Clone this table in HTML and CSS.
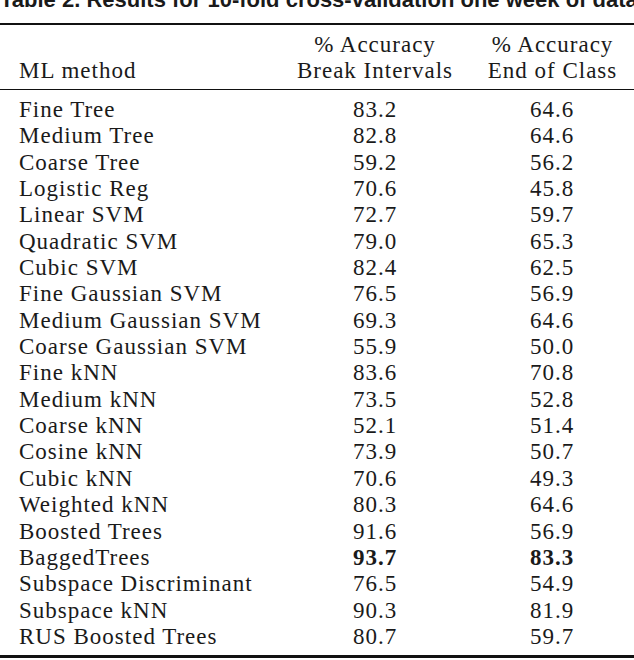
FILE: index.html
```html
<!DOCTYPE html>
<html>
<head>
<meta charset="utf-8">
<link rel="stylesheet" href="styles.css">
</head>
<body>
<div class="caption">Table 2. Results for 10-fold cross-validation one week of data:</div>
<table class="results">
  <thead>
    <tr>
      <th class="method">ML method</th>
      <th class="num"><span>% Accuracy</span><br><span>Break Intervals</span></th>
      <th class="num"><span>% Accuracy</span><br><span>End of Class</span></th>
    </tr>
  </thead>
  <tbody>
    <tr class="first"><td>Fine Tree</td><td class="num">83.2</td><td class="num">64.6</td></tr>
    <tr><td>Medium Tree</td><td class="num">82.8</td><td class="num">64.6</td></tr>
    <tr><td>Coarse Tree</td><td class="num">59.2</td><td class="num">56.2</td></tr>
    <tr><td>Logistic Reg</td><td class="num">70.6</td><td class="num">45.8</td></tr>
    <tr><td>Linear SVM</td><td class="num">72.7</td><td class="num">59.7</td></tr>
    <tr><td>Quadratic SVM</td><td class="num">79.0</td><td class="num">65.3</td></tr>
    <tr><td>Cubic SVM</td><td class="num">82.4</td><td class="num">62.5</td></tr>
    <tr><td>Fine Gaussian SVM</td><td class="num">76.5</td><td class="num">56.9</td></tr>
    <tr><td>Medium Gaussian SVM</td><td class="num">69.3</td><td class="num">64.6</td></tr>
    <tr><td>Coarse Gaussian SVM</td><td class="num">55.9</td><td class="num">50.0</td></tr>
    <tr><td>Fine kNN</td><td class="num">83.6</td><td class="num">70.8</td></tr>
    <tr><td>Medium kNN</td><td class="num">73.5</td><td class="num">52.8</td></tr>
    <tr><td>Coarse kNN</td><td class="num">52.1</td><td class="num">51.4</td></tr>
    <tr><td>Cosine kNN</td><td class="num">73.9</td><td class="num">50.7</td></tr>
    <tr><td>Cubic kNN</td><td class="num">70.6</td><td class="num">49.3</td></tr>
    <tr><td>Weighted kNN</td><td class="num">80.3</td><td class="num">64.6</td></tr>
    <tr><td>Boosted Trees</td><td class="num">91.6</td><td class="num">56.9</td></tr>
    <tr><td>BaggedTrees</td><td class="num best">93.7</td><td class="num best">83.3</td></tr>
    <tr><td>Subspace Discriminant</td><td class="num">76.5</td><td class="num">54.9</td></tr>
    <tr><td>Subspace kNN</td><td class="num">90.3</td><td class="num">81.9</td></tr>
    <tr class="last"><td>RUS Boosted Trees</td><td class="num">80.7</td><td class="num">59.7</td></tr>
  </tbody>
</table>
</body>
</html>
```

FILE: styles.css
```css
html, body {
  margin: 0;
  padding: 0;
  background: #ffffff;
}

body {
  width: 634px;
  height: 660px;
  overflow: hidden;
  color: #1a1a1a;
}

.caption {
  font-family: "Liberation Sans", Arial, sans-serif;
  font-weight: bold;
  font-size: 22px;
  line-height: 22px;
  margin-top: -11px;
  white-space: nowrap;
  color: #1a1a1a;
}

.results {
  margin-top: 12px;
  width: 634px;
  border-collapse: collapse;
  font-family: "Liberation Serif", "Times New Roman", serif;
  font-size: 23px;
  letter-spacing: 1px;
  color: #1a1a1a;
  border-top: 2px solid #111;
  border-bottom: 3px solid #111;
}

.results th {
  font-weight: normal;
  line-height: 26px;
  padding-top: 7px;
  padding-bottom: 5px;
  border-bottom: 1px solid #111;
  vertical-align: bottom;
}

.results th.method {
  text-align: left;
  padding-left: 19px;
}

.results td {
  line-height: 26.35px;
  padding: 0;
}

.results td:first-child {
  padding-left: 19px;
  width: 257px;
}

.results .num {
  text-align: center;
}

.results th.num:nth-child(2),
.results td.num:nth-child(2) {
  width: 196px;
}

.results th.num:nth-child(3),
.results td.num:nth-child(3) {
  padding-right: 4px;
}

.results tr.first td {
  padding-top: 7px;
}

.results tr.last td {
  padding-bottom: 5px;
}

.results .best {
  font-weight: bold;
}
```
